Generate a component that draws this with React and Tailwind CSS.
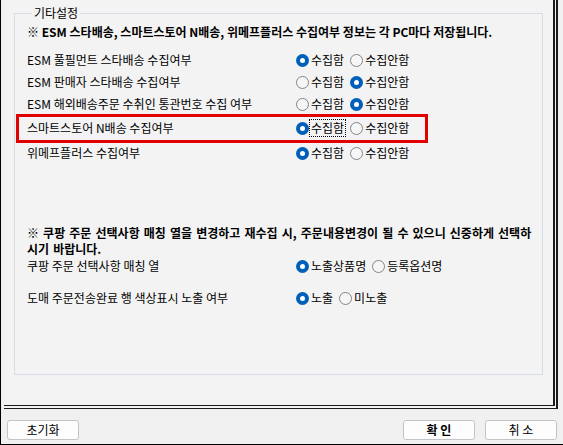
import { useState } from "react";

const font = { fontFamily: '"Noto Sans CJK KR", "Noto Sans", sans-serif' };

function Radio({ checked, label, focus, onClick, first }) {
    return (
        <label className={`flex items-center cursor-default ${first ? "" : "ml-[6px]"}`} onClick={onClick}>
            {checked ? (
                <span className="w-[13px] h-[13px] rounded-full bg-[#005fb8] flex items-center justify-center">
                    <span className="w-[5px] h-[5px] rounded-full bg-white" />
                </span>
            ) : (
                <span className="w-[13px] h-[13px] rounded-full border border-[#858585] bg-[#f6f6f6]" />
            )}
            <span
                className={`ml-[2px] leading-[14px] ${focus ? "outline-1 outline-dotted outline-black outline-offset-[1px]" : ""}`}
            >
                {label}
            </span>
        </label>
    );
}

function Row({ label, options, value, onChange, h = "h-[22px]", focusFirst }) {
    return (
        <div className={`flex items-center ${h}`}>
            <div className="w-[269px] shrink-0">{label}</div>
            <div className="flex items-center">
                {options.map((o, i) => (
                    <Radio
                        key={o}
                        first={i === 0}
                        label={o}
                        checked={value === i}
                        focus={focusFirst && i === 0}
                        onClick={() => onChange(i)}
                    />
                ))}
            </div>
        </div>
    );
}

export default function App() {
    const [v, setV] = useState([0, 1, 1, 0, 0, 0, 0]);
    const set = (k) => (i) => setV((p) => p.map((x, j) => (j === k ? i : x)));
    const yn = ["수집함", "수집안함"];

    return (
        <div
            className="w-[563px] h-[445px] bg-[#f0f0f0] border-l border-b border-black text-[12px] text-black flex flex-col overflow-hidden"
            style={font}
        >
            {/* 설정 패널 */}
            <div className="relative ml-[3px] w-[554px] h-[409px] shrink-0 bg-[#f3f3f3] border-r-[5px] border-b-[4px] border-double border-[#1a1a1a] pl-[10px] pr-[10px] pt-[5px]">
                <fieldset className="w-[529px] h-[370px] border border-[#d6dce3] pl-[12px]">
                    <legend className="ml-[5px] px-[2px] leading-[16px]">기타설정</legend>

                    <div className="h-[22px] flex items-center font-bold whitespace-nowrap">
                        ※ ESM 스타배송, 스마트스토어 N배송, 위메프플러스 수집여부 정보는 각 PC마다 저장됩니다.
                    </div>

                    <div className="mt-[6px]">
                        <Row label="ESM 풀필먼트 스타배송 수집여부" options={yn} value={v[0]} onChange={set(0)} />
                        <Row label="ESM 판매자 스타배송 수집여부" options={yn} value={v[1]} onChange={set(1)} />
                        <Row label="ESM 해외배송주문 수취인 통관번호 수집 여부" options={yn} value={v[2]} onChange={set(2)} />
                        <Row
                            label="스마트스토어 N배송 수집여부"
                            options={yn}
                            value={v[3]}
                            onChange={set(3)}
                            h="h-[26px]"
                            focusFirst
                        />
                        <Row label="위메프플러스 수집여부" options={yn} value={v[4]} onChange={set(4)} h="h-[24px]" />
                    </div>

                    <div className="mt-[60px] font-bold leading-[16px] whitespace-nowrap [word-spacing:1.4px]">
                        ※ 쿠팡 주문 선택사항 매칭 열을 변경하고 재수집 시, 주문내용변경이 될 수 있으니 신중하게 선택하
                        <br />
                        시기 바랍니다.
                    </div>

                    <div>
                        <Row
                            label="쿠팡 주문 선택사항 매칭 열"
                            options={["노출상품명", "등록옵션명"]}
                            value={v[5]}
                            onChange={set(5)}
                            h="h-[18px]"
                        />
                        <div className="h-[12px]" />
                        <Row
                            label="도매 주문전송완료 행 색상표시 노출 여부"
                            options={["노출", "미노출"]}
                            value={v[6]}
                            onChange={set(6)}
                        />
                    </div>
                </fieldset>

                {/* 강조 표시 */}
                <div className="absolute left-[12px] top-[114px] w-[412px] h-[29px] border-[3px] border-[#e00000]" />
            </div>

            {/* 하단 버튼 */}
            <div className="flex items-start pl-[6px] pr-[6px] pt-[11px]">
                <button className="w-[72px] h-[20px] bg-[#fdfdfd] border border-[#c4c4c4] rounded-[3px] leading-[18px]">
                    초기화
                </button>
                <button className="ml-auto w-[72px] h-[20px] bg-[#fdfdfd] border border-[#c4c4c4] rounded-[3px] font-bold leading-[18px]">
                    확 인
                </button>
                <button className="ml-[10px] w-[72px] h-[20px] bg-[#fdfdfd] border border-[#c4c4c4] rounded-[3px] leading-[18px]">
                    취 소
                </button>
            </div>
        </div>
    );
}
